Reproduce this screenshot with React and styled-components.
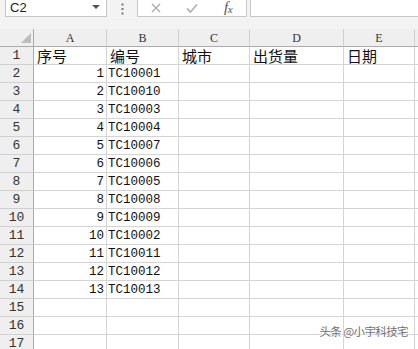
import React from "react";
import styled, { createGlobalStyle } from "styled-components";

const Global = createGlobalStyle`
  html, body { margin: 0; padding: 0; background: #fff; overflow: hidden; }
  * { box-sizing: border-box; }
`;

const Frame = styled.div`
  position: relative;
  width: 418px;
  height: 349px;
  overflow: hidden;
  background: #fff;
  font-family: "Liberation Sans", Arial, sans-serif;
`;

const FormulaBar = styled.div`
  display: flex;
  align-items: stretch;
  height: 17px;
  background: #f3f3f3;
  padding-left: 5px;
`;

const NameBox = styled.div`
  display: flex;
  align-items: center;
  width: 102px;
  background: #fff;
  border: 1px solid #c6c6c6;
  border-top: none;
  padding: 0 6px 0 4px;
  font-size: 13px;
  color: #222;
  font-family: "Liberation Sans", Arial, sans-serif;
`;

const NameText = styled.span`
  flex: 1;
  line-height: 16px;
`;

const Caret = styled.span`
  width: 0;
  height: 0;
  border-left: 4px solid transparent;
  border-right: 4px solid transparent;
  border-top: 4px solid #555;
  margin-bottom: 2px;
`;

const Grip = styled.div`
  width: 30px;
  display: flex;
  align-items: center;
  justify-content: center;
`;

const FnBox = styled.div`
  display: flex;
  width: 110px;
  background: #fff;
  border: 1px solid #c6c6c6;
  border-top: none;
`;

const FnSlot = styled.div`
  width: 36px;
  display: flex;
  align-items: center;
  justify-content: center;
  padding-bottom: 1px;
`;

const Fx = styled.span`
  font-family: "Liberation Serif", "DejaVu Serif", serif;
  font-style: italic;
  font-size: 15px;
  line-height: 14px;
  color: #555;
  letter-spacing: -0.5px;
  & > sub {
    font-size: 11px;
    vertical-align: -1px;
  }
`;

const FormulaInput = styled.div`
  flex: 1;
  margin-left: 3px;
  background: #fff;
  border: 1px solid #c6c6c6;
  border-top: none;
  border-right: none;
`;

const Spacer = styled.div`
  height: 12px;
  background: #f3f3f3;
  border-top: 1px solid #f7f7f7;
`;

const Sheet = styled.div`
  display: grid;
  grid-template-columns: 34px 73px 72px 71px 94px 71px 40px;
  grid-auto-rows: 18px;
`;

const Corner = styled.div`
  background: #efefef;
  border-right: 1px solid #ababab;
  border-bottom: 1px solid #ababab;
  display: flex;
  align-items: flex-end;
  justify-content: flex-end;
  padding: 0 2px 3px 0;
`;

const CornerTri = styled.div`
  width: 10px;
  height: 10px;
  background: #bcbcbc;
  clip-path: polygon(100% 0, 100% 100%, 0 100%);
`;

const ColHead = styled.div`
  background: #efefef;
  border-right: 1px solid #d0d0d0;
  border-bottom: 1px solid #ababab;
  display: flex;
  align-items: center;
  justify-content: center;
  font-family: "Liberation Serif", "DejaVu Serif", serif;
  font-size: 12px;
  color: #333;
  padding-top: 1px;
`;

const RowHead = styled.div`
  background: #efefef;
  border-right: 1px solid #ababab;
  border-bottom: 1px solid #d0d0d0;
  display: flex;
  align-items: center;
  justify-content: center;
  font-family: "Liberation Mono", "DejaVu Sans Mono", monospace;
  font-size: 13px;
  color: #333;
`;

const Cell = styled.div`
  border-right: 1px solid #d4d4d4;
  border-bottom: 1px solid #d4d4d4;
  display: flex;
  align-items: center;
  justify-content: ${(p) => (p.$right ? "flex-end" : "flex-start")};
  padding: ${(p) => (p.$right ? "0 2px 0 0" : p.$cjk ? "0 0 0 3px" : "0 0 0 1px")};
  font-family: ${(p) =>
    p.$cjk
      ? '"Noto Sans CJK SC", "Noto Sans CJK JP", sans-serif'
      : '"Liberation Mono", "DejaVu Sans Mono", monospace'};
  font-size: ${(p) => (p.$cjk ? "15px" : "12.5px")};
  color: #111;
  white-space: nowrap;
  overflow: visible;
`;

const Watermark = styled.div`
  position: absolute;
  right: 10px;
  bottom: 10px;
  font-family: "Noto Sans CJK SC", sans-serif;
  font-size: 11.5px;
  color: #6f6f6f;
  text-shadow: 0 0 2px #fff, 0 0 2px #fff;
  letter-spacing: -0.6px;
`;

const cols = ["A", "B", "C", "D", "E", ""];
const header = ["序号", "编号", "城市", "出货量", "日期", ""];
const codes = [
  "TC10001", "TC10010", "TC10003", "TC10004", "TC10007", "TC10006", "TC10005",
  "TC10008", "TC10009", "TC10002", "TC10011", "TC10012", "TC10013",
];

export default function App() {
  const rows = [];
  rows.push(
    <React.Fragment key="r1">
      <RowHead>1</RowHead>
      {header.map((h, i) => (
        <Cell key={i} $cjk>{h}</Cell>
      ))}
    </React.Fragment>
  );
  for (let r = 2; r <= 17; r++) {
    const idx = r - 2;
    const has = idx < codes.length;
    rows.push(
      <React.Fragment key={"r" + r}>
        <RowHead>{r}</RowHead>
        <Cell $right>{has ? idx + 1 : ""}</Cell>
        <Cell>{has ? codes[idx] : ""}</Cell>
        <Cell />
        <Cell />
        <Cell />
        <Cell />
      </React.Fragment>
    );
  }
  return (
    <Frame>
      <Global />
      <FormulaBar>
        <NameBox>
          <NameText>C2</NameText>
          <Caret />
        </NameBox>
        <Grip>
          <svg width="3" height="12" viewBox="0 0 3 12">
            <rect x="0.5" y="0.5" width="2" height="2" fill="#777" />
            <rect x="0.5" y="5" width="2" height="2" fill="#777" />
            <rect x="0.5" y="9.5" width="2" height="2" fill="#777" />
          </svg>
        </Grip>
        <FnBox>
          <FnSlot>
            <svg width="10" height="10" viewBox="0 0 10 10">
              <path d="M1 1 L9 9 M9 1 L1 9" stroke="#ababab" strokeWidth="1.3" fill="none" />
            </svg>
          </FnSlot>
          <FnSlot>
            <svg width="12" height="10" viewBox="0 0 12 10">
              <path d="M1 5.5 L4.5 9 L11 1.5" stroke="#b5b5b5" strokeWidth="1.8" fill="none" />
            </svg>
          </FnSlot>
          <FnSlot>
            <Fx>f<sub>x</sub></Fx>
          </FnSlot>
        </FnBox>
        <FormulaInput />
      </FormulaBar>
      <Spacer />
      <Sheet>
        <Corner>
          <CornerTri />
        </Corner>
        {cols.map((c, i) => (
          <ColHead key={i}>{c}</ColHead>
        ))}
        {rows}
      </Sheet>
      <Watermark>头条 @小宇科技宅</Watermark>
    </Frame>
  );
}
